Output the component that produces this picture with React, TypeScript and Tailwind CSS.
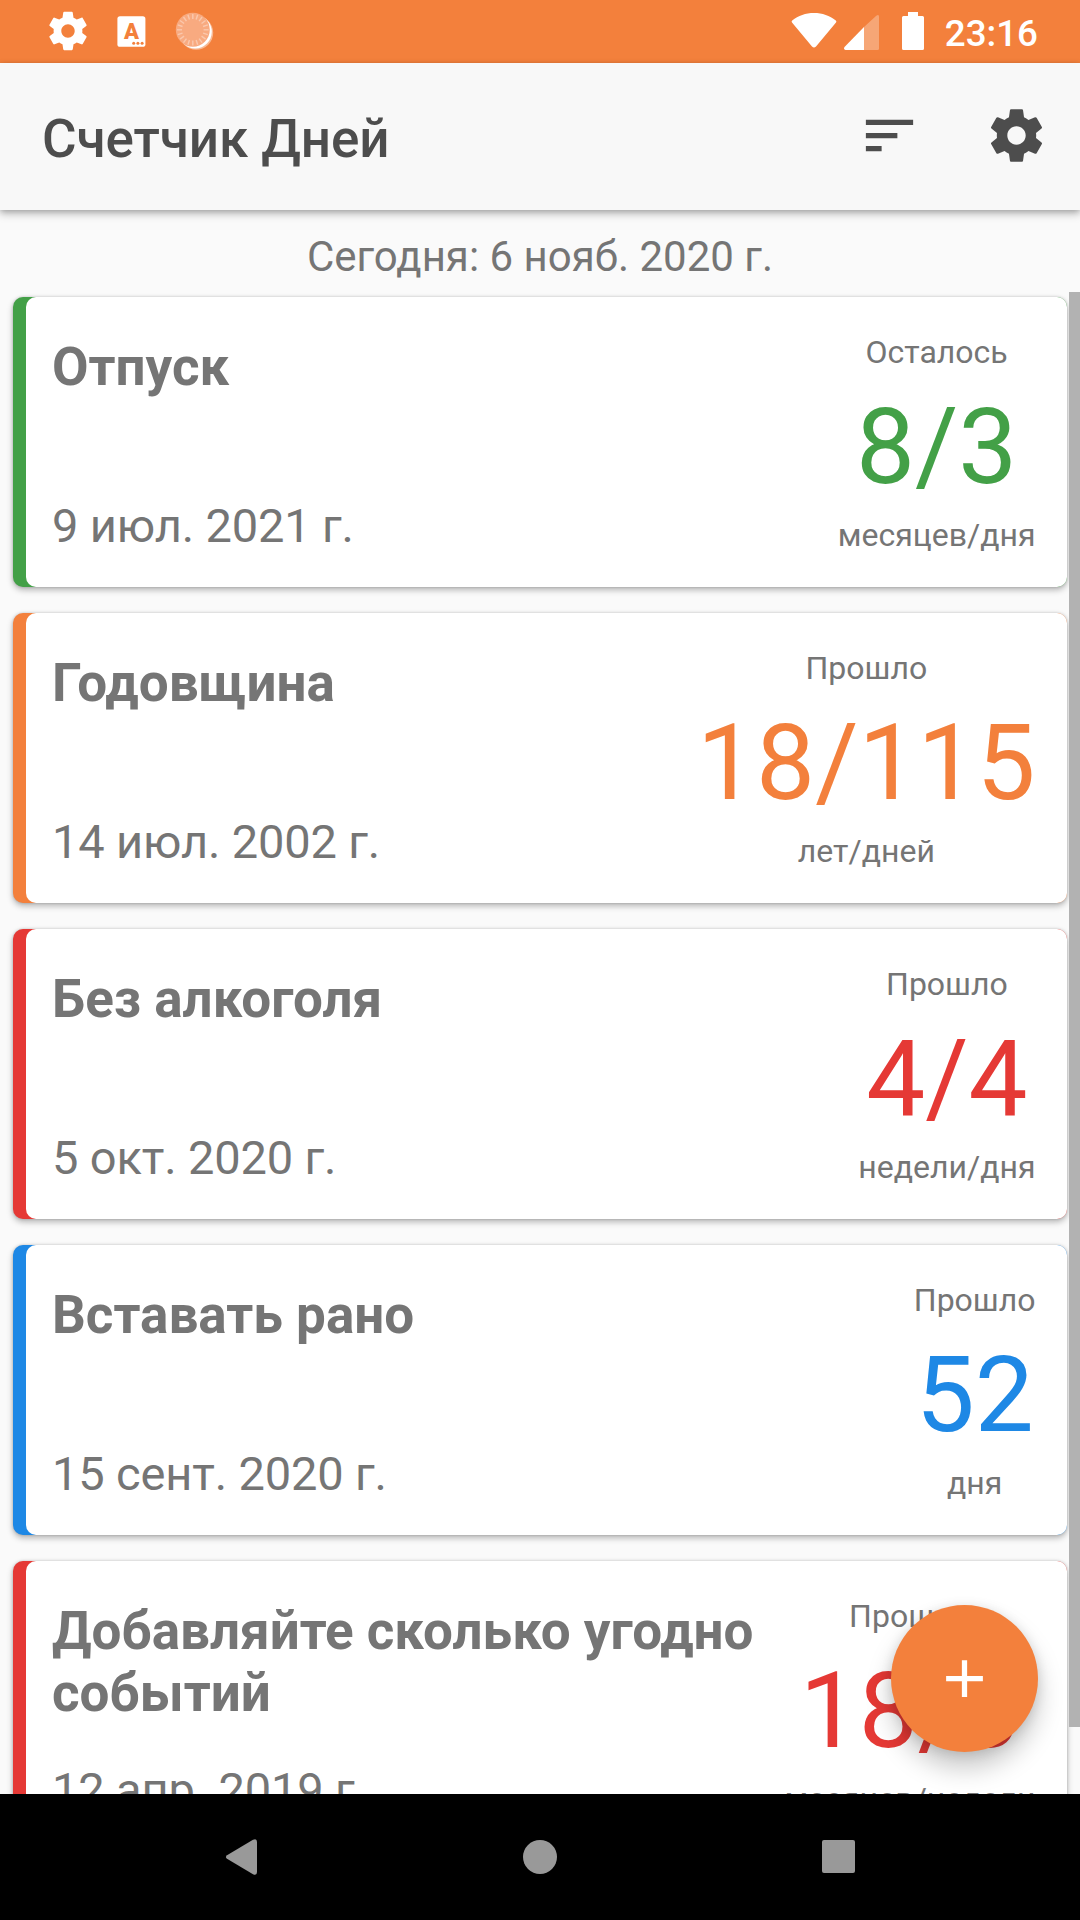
import React from "react";

type Accent = "green" | "orange" | "red" | "blue";

interface DayEvent {
  title: string;
  date: string;
  label: string;
  value: string;
  unit: string;
  accent: Accent;
}

const events: DayEvent[] = [
  { title: "Отпуск", date: "9 июл. 2021 г.", label: "Осталось", value: "8/3", unit: "месяцев/дня", accent: "green" },
  { title: "Годовщина", date: "14 июл. 2002 г.", label: "Прошло", value: "18/115", unit: "лет/дней", accent: "orange" },
  { title: "Без алкоголя", date: "5 окт. 2020 г.", label: "Прошло", value: "4/4", unit: "недели/дня", accent: "red" },
  { title: "Вставать рано", date: "15 сент. 2020 г.", label: "Прошло", value: "52", unit: "дня", accent: "blue" },
  { title: "Добавляйте сколько угодно событий", date: "12 апр. 2019 г.", label: "Прошло", value: "18/3", unit: "месяцев/недели", accent: "red" },
];

const barColors: Record<Accent, string> = {
  green: "bg-[#43a047]",
  orange: "bg-[#f3803c]",
  red: "bg-[#e53935]",
  blue: "bg-[#1e88e5]",
};

const textColors: Record<Accent, string> = {
  green: "text-[#43a047]",
  orange: "text-[#f3803c]",
  red: "text-[#e53935]",
  blue: "text-[#1e88e5]",
};

const GearIcon: React.FC<{ className: string }> = ({ className }) => (
  <svg className={className} viewBox="0 0 24 24" fill="currentColor">
    <path d="M19.43 12.98c.04-.32.07-.64.07-.98s-.03-.66-.07-.98l2.11-1.65c.19-.15.24-.42.12-.64l-2-3.46c-.12-.22-.39-.3-.61-.22l-2.49 1c-.52-.4-1.08-.73-1.69-.98l-.38-2.65C14.46 2.18 14.25 2 14 2h-4c-.25 0-.46.18-.49.42l-.38 2.65c-.61.25-1.17.59-1.69.98l-2.49-1c-.23-.09-.49 0-.61.22l-2 3.46c-.13.22-.07.49.12.64l2.11 1.65c-.04.32-.07.65-.07.98s.03.66.07.98l-2.11 1.65c-.19.15-.24.42-.12.64l2 3.46c.12.22.39.3.61.22l2.49-1c.52.4 1.08.73 1.69.98l.38 2.65c.03.24.24.42.49.42h4c.25 0 .46-.18.49-.42l.38-2.65c.61-.25 1.17-.59 1.69-.98l2.49 1c.23.09.49 0 .61-.22l2-3.46c.12-.22.07-.49-.12-.64l-2.11-1.65zM12 15.5c-1.93 0-3.5-1.57-3.5-3.5s1.57-3.5 3.5-3.5 3.5 1.57 3.5 3.5-1.57 3.5-3.5 3.5z" />
  </svg>
);

const ticks = Array.from({ length: 20 }, (_, i) => i * 18);

const StatusBar = () => (
  <div className="flex h-[63px] shrink-0 items-start bg-[#f3803c] text-white">
    <GearIcon className="ml-[45px] mt-[8px] size-[46px]" />

    <svg className="ml-[26px] mt-[16px] h-[31px] w-[29px]" viewBox="0 0 29 31">
      <rect x="0.4" y="0.2" width="28" height="30.6" rx="2.6" fill="#fff" />
      <text x="14.4" y="23" textAnchor="middle" fontFamily="Roboto" fontWeight="900" fontSize="22" fill="#f3803c">A</text>
      <circle cx="16.7" cy="27.2" r="1.5" fill="#f3803c" />
      <circle cx="20.9" cy="27.2" r="1.5" fill="#f3803c" />
      <circle cx="25.1" cy="27.2" r="1.5" fill="#f3803c" />
    </svg>

    {/* sync spinner */}
    <svg className="ml-[29px] mt-[11px] size-[40px]" viewBox="0 0 40 40">
      <circle cx="21.2" cy="21.8" r="17" fill="#fff" fillOpacity="0.45" />
      <circle cx="20.2" cy="20.8" r="16.6" fill="#fff" />
      <circle cx="17.8" cy="18.8" r="17" fill="#f8aa80" />
      {ticks.map((a) => (
        <line key={a} x1="17.8" y1="3" x2="17.8" y2="8" stroke="#fac8ad" strokeWidth="1.4" transform={`rotate(${a} 17.8 18.8)`} />
      ))}
    </svg>

    <svg className="ml-auto mt-[12px] h-[38px] w-[46px]" viewBox="0 0 46 38" fill="#fff">
      <path d="M1.2 8.4C7.4 3.6 14.6 1 23 1s15.600 2.600 21.800 7.400q1.100 1 .2 2.200L25 34.500q-2 2-4 0L1 10.600q-.9-1.200.2-2.200z" />
    </svg>
    <svg className="ml-[7px] mt-[14px] h-[37px] w-[36px]" viewBox="0 0 36 37" fill="#fff">
      <path d="M20 13L32.300 1.700Q35 -.2 35 2.600V34.500q0 1.500-1.500 1.500H20z" fillOpacity="0.3" />
      <path d="M20 13V36H1.600Q-.8 35.400.5 33z" />
    </svg>
    <svg className="ml-[22px] mt-[12px] h-[38px] w-[22px]" viewBox="0 0 22 38" fill="#fff">
      <path d="M6 0h10v4h4.500q1.500 0 1.500 1.500v31q0 1.500-1.500 1.500h-19Q0 38 0 36.500v-31Q0 4 1.500 4H6z" />
    </svg>
    <span className="ml-[21px] mr-[42px] mt-[12px] text-[36.75px] font-medium leading-[43px]">23:16</span>
  </div>
);

const AppBar = () => (
  <header className="relative z-10 flex h-[147px] shrink-0 items-start bg-[#f8f8f8] text-[#4d4d4d] shadow-[0_4px_8px_rgba(0,0,0,0.25),0_1px_5px_rgba(0,0,0,0.16)]">
    <h1 className="ml-[42px] mt-[44.5px] flex-1 text-[53px] font-medium leading-[62px] tracking-[-0.1px]">Счетчик Дней</h1>
    <button type="button" className="mt-[40.75px]">
      <svg className="size-[63px]" viewBox="0 0 24 24" fill="currentColor">
        <path d="M3 18h6v-2H3v2zM3 6v2h18V6H3zm0 7h12v-2H3v2z" />
      </svg>
    </button>
    <button type="button" className="ml-[64px] mr-[32px] mt-[40.75px]">
      <GearIcon className="size-[63px]" />
    </button>
  </header>
);

const EventCard: React.FC<{ event: DayEvent }> = ({ event }) => (
  <div className={`h-[290px] shrink-0 rounded-[10px] pl-[13px] shadow-[0_3px_6px_rgba(0,0,0,0.28),0_0_3px_rgba(0,0,0,0.18)] ${barColors[event.accent]}`}>
    <div className="flex h-full rounded-[10px] bg-white pl-[26px] pr-[31.5px]">
      <div className="flex min-w-0 flex-1 flex-col justify-between pb-[33px] pt-[38.5px]">
        <h2 className="text-[53px] font-bold leading-[62px]">{event.title}</h2>
        <p className="text-[47px] leading-[56px] tracking-[-0.15px]">{event.date}</p>
      </div>
      <div className="flex shrink-0 flex-col items-center pt-[36.5px]">
        <span className="text-[32px] leading-[37px]">{event.label}</span>
        <span className={`mt-[15.5px] text-[105px] leading-[123px] ${textColors[event.accent]}`}>{event.value}</span>
        <span className="mt-[8px] text-[32px] leading-[37px]">{event.unit}</span>
      </div>
    </div>
  </div>
);

const NavBar = () => (
  <nav className="flex h-[126px] shrink-0 items-center justify-between bg-black pb-px pl-[224px] pr-[225px] text-[#999]">
    <svg className="h-[38px] w-[34px]" viewBox="0 0 34 38" fill="currentColor">
      <path d="M3 17.2L29 1.8Q33 0 33 4V34q0 4-4 2.200L3 20.800Q.8 19 3 17.200z" />
    </svg>
    <div className="size-[34px] rounded-full bg-[#999]" />
    <div className="size-[33px] rounded-[2px] bg-[#999]" />
  </nav>
);

const App: React.FC = () => {
  return (
    <div className="flex h-[1920px] w-[1080px] flex-col overflow-hidden bg-[#fafafa] font-['Roboto',sans-serif] text-[#757575]">
      <StatusBar />
      <AppBar />

      <main className="relative flex min-h-0 flex-1 flex-col overflow-hidden">
        <p className="h-[82px] shrink-0 pt-[22px] text-center text-[42px] leading-[49px]">Сегодня: 6 нояб. 2020 г.</p>
        <div className="flex min-h-0 flex-1 overflow-hidden">
          <div className="flex flex-1 flex-col gap-[26px] pl-[13px] pr-[2px] pt-[5px]">
            {events.map((event) => (
              <EventCard key={event.title} event={event} />
            ))}
          </div>
          <div className="h-[1435px] w-[11px] bg-[#b2b2b2]" />
        </div>

        <button
          type="button"
          className="absolute bottom-[42px] right-[42px] flex size-[147px] items-center justify-center rounded-full bg-[#f3803c] shadow-[0_16px_26px_rgba(0,0,0,0.22),0_2px_12px_rgba(0,0,0,0.12)]"
        >
          <svg className="size-[63px]" viewBox="0 0 24 24" fill="#fff">
            <path d="M19 13h-6v6h-2v-6H5v-2h6V5h2v6h6v2z" />
          </svg>
        </button>
      </main>

      <NavBar />
    </div>
  );
};

export default App;
